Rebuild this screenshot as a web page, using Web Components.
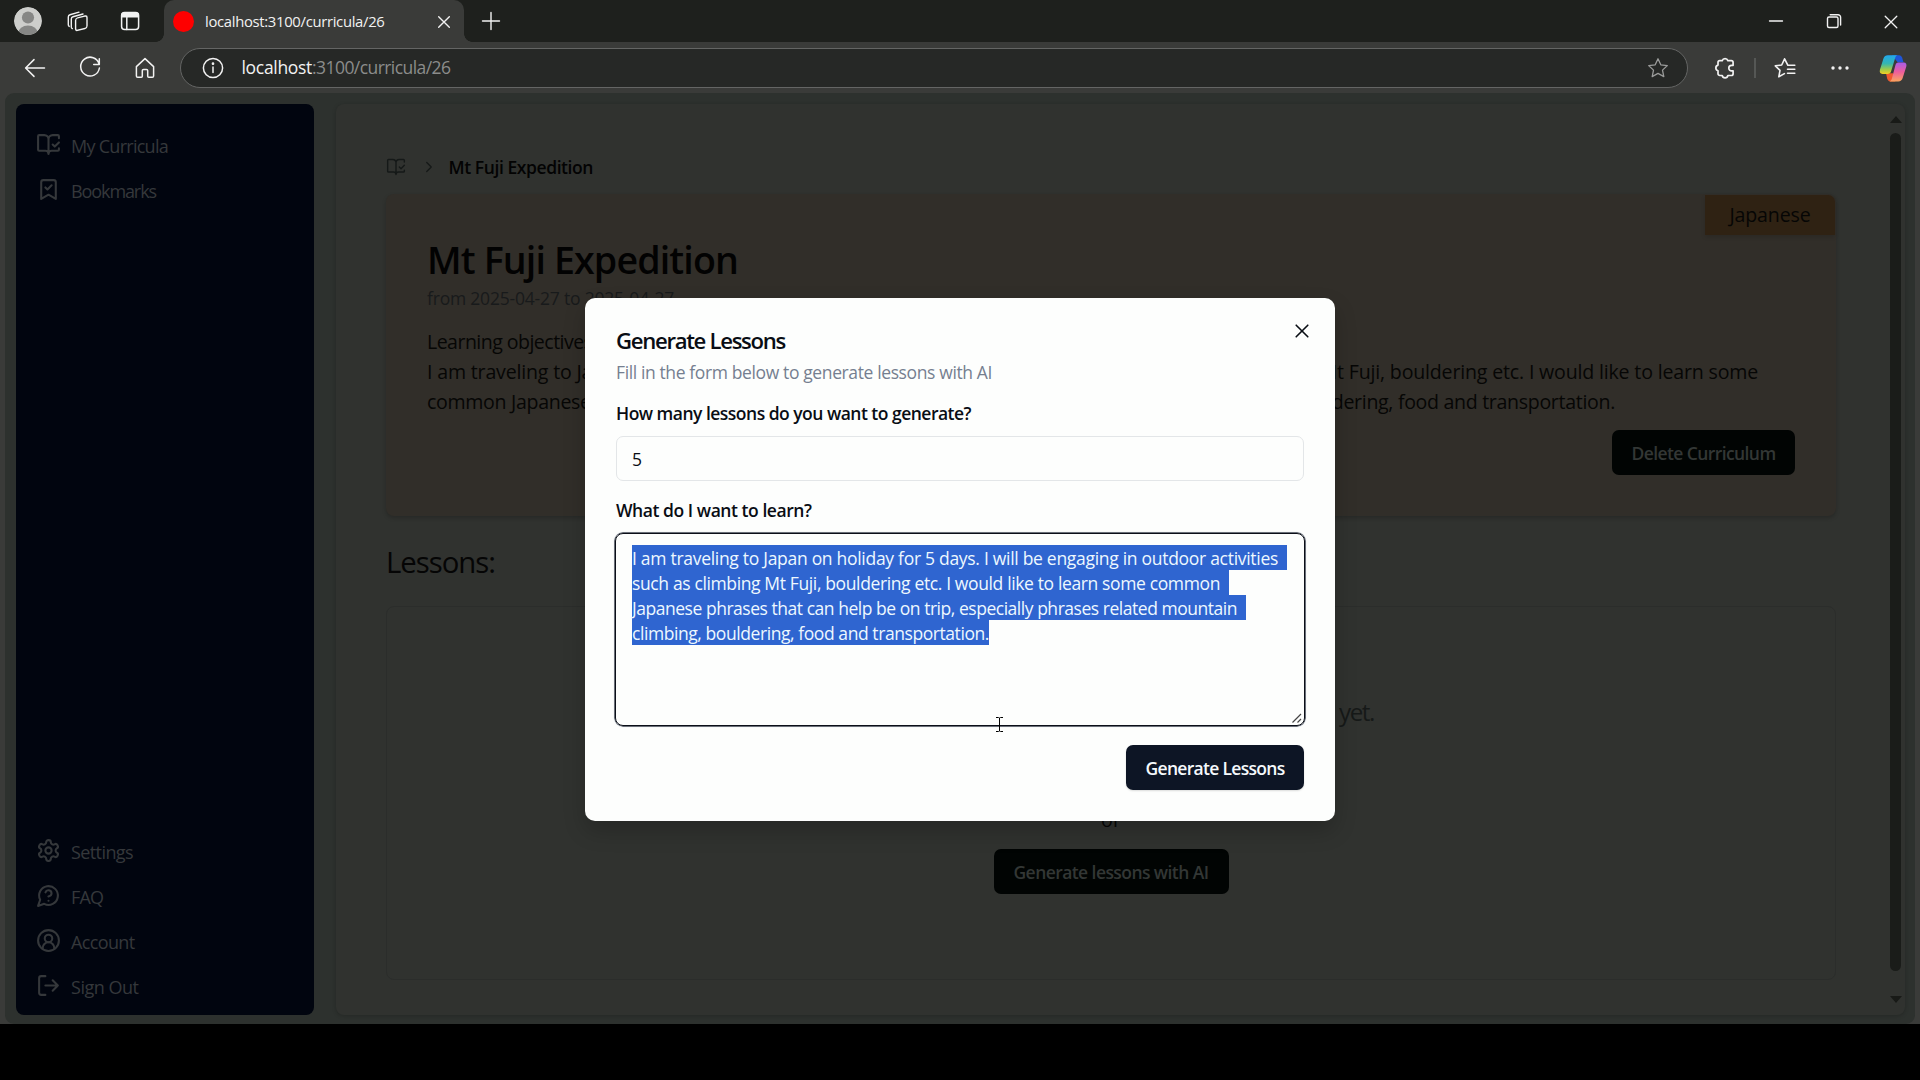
<!DOCTYPE html>
<html lang="en">
<head>
<meta charset="utf-8">
<title>localhost:3100/curricula/26</title>
<style>
html,body{margin:0;background:#000;height:100%;overflow:hidden}
body{font-family:"Open Sans","Noto Sans",sans-serif}
</style>
</head>
<body>
<browser-window></browser-window>
<script>
const ICONS={
 book:'<path d="M12 21V7M16 12l2 2 4-4M22 6V4a1 1 0 0 0-1-1h-5a4 4 0 0 0-4 4 4 4 0 0 0-4-4H3a1 1 0 0 0-1 1v13a1 1 0 0 0 1 1h6a3 3 0 0 1 3 3 3 3 0 0 1 3-3h6a1 1 0 0 0 1-1v-1.3"/>',
 bookmark:'<path d="m19 21-7-4-7 4V5a2 2 0 0 1 2-2h10a2 2 0 0 1 2 2ZM9 10l2 2 4-4"/>',
 gear:'<path d="M12.22 2h-.44a2 2 0 0 0-2 2v.18a2 2 0 0 1-1 1.73l-.43.25a2 2 0 0 1-2 0l-.15-.08a2 2 0 0 0-2.73.73l-.22.38a2 2 0 0 0 .73 2.73l.15.1a2 2 0 0 1 1 1.72v.51a2 2 0 0 1-1 1.74l-.15.09a2 2 0 0 0-.73 2.73l.22.38a2 2 0 0 0 2.73.73l.15-.08a2 2 0 0 1 2 0l.43.25a2 2 0 0 1 1 1.73V20a2 2 0 0 0 2 2h.44a2 2 0 0 0 2-2v-.18a2 2 0 0 1 1-1.73l.43-.25a2 2 0 0 1 2 0l.15.08a2 2 0 0 0 2.73-.73l.22-.39a2 2 0 0 0-.73-2.73l-.15-.08a2 2 0 0 1-1-1.74v-.5a2 2 0 0 1 1-1.74l.15-.09a2 2 0 0 0 .73-2.73l-.22-.38a2 2 0 0 0-2.73-.73l-.15.08a2 2 0 0 1-2 0l-.43-.25a2 2 0 0 1-1-1.73V4a2 2 0 0 0-2-2z"/><circle cx="12" cy="12" r="3"/>',
 faq:'<path d="M7.9 20A9 9 0 1 0 4 16.1L2 22ZM9.09 9a3 3 0 0 1 5.83 1c0 2-3 3-3 3M12 17h.01"/>',
 user:'<path d="M17.6 20.2v-.9a5.6 5.6 0 0 0-11.2 0v.9"/><circle cx="12" cy="10" r="3.6"/><circle cx="12" cy="12" r="10"/>',
 logout:'<path d="m16 17 5-5-5-5M21 12H9M9 21H5a2 2 0 0 1-2-2V5a2 2 0 0 1 2-2h4"/>',
 chevron:'<path d="m9 18 6-6-6-6"/>',
 close:'<path d="M6.2 6.2l11.6 11.6M17.8 6.2L6.2 17.8"/>',
 plus:'<path d="M12 3.5v17M3.5 12h17"/>',
 minimize:'<path d="M5.5 12h13"/>',
 restore:'<rect x="5.5" y="8" width="10.5" height="10.5" rx="1.5"/><path d="M8.2 5.7h7.8a2.6 2.6 0 0 1 2.6 2.6v7.7"/>',
 back:'<path d="M21.5 12H2.8M11 3.6L2.6 12l8.4 8.4"/>',
 reload:'<path d="M21.2 8.2A9.4 9.4 0 1 0 21.4 12M21.3 2.8v5.6h-5.6"/>',
 home:'<path d="M3.4 10.6 12 2.6l8.6 8v9.3a1.3 1.3 0 0 1-1.3 1.3h-3.6a1 1 0 0 1-1-1v-5.6a1.2 1.2 0 0 0-1.2-1.2h-3a1.2 1.2 0 0 0-1.2 1.2v5.6a1 1 0 0 1-1 1H4.7a1.3 1.3 0 0 1-1.3-1.3z"/>',
 info:'<circle cx="12" cy="12" r="9.6"/><path d="M12 11v5.6"/><circle cx="12" cy="7.7" r=".6" fill="currentColor"/>',
 star:'<path d="m12 2.8 2.8 6 6.5.8-4.8 4.5 1.3 6.5L12 17.4l-5.8 3.2 1.3-6.5-4.8-4.5 6.5-.8z"/>',
 puzzle:'<path d="M9.2 4.7a3 3 0 0 1 5.7 0h3.4a1.8 1.8 0 0 1 1.8 1.8v2.8h-1.5a2.8 2.8 0 0 0 0 5.6h1.5v2.8a1.8 1.8 0 0 1-1.8 1.8h-3.4a2.9 2.9 0 0 1-5.7 0H6.8A1.8 1.8 0 0 1 5 17.7v-3a2.9 2.9 0 0 1 0-5.6V6.5a1.8 1.8 0 0 1 1.8-1.8z"/>',
 favs:'<path d="M19 9.3h-4.1L11.6 2.8 8.7 9l-6.4.8 4.7 4.5-1.2 6.5 5.6-3.2M14.5 13.2h7.3M14.5 17.2h7.3M16.5 9.3h5.3"/>',
 dots:'<g fill="currentColor" stroke="none"><circle cx="5" cy="12" r="1.7"/><circle cx="12" cy="12" r="1.7"/><circle cx="19" cy="12" r="1.7"/></g>',
 stack:'<rect x="9.6" y="8.2" width="11.4" height="12.4" rx="2" transform="skewY(-14) translate(0 3.6)"/><path d="M6.3 19.6a2 2 0 0 1-1-1.7V10c0-1.2.6-2 1.7-2.3l10-2.7M3.2 17.4a2 2 0 0 1-.9-1.6V8c0-1.2.6-2 1.7-2.3l9-2.6"/>',
 panel:'<rect x="3.6" y="3.6" width="17" height="17" rx="3"/><path d="M8.8 8.6v12"/><path d="M3.2 8.6V6.2a3 3 0 0 1 3-3h11.8a3 3 0 0 1 3 3v2.4z" fill="currentColor" stroke="none"/>',
 avatar:'<clipPath id="c"><circle cx="12" cy="12" r="12"/></clipPath><g stroke="none" clip-path="url(#c)"><circle cx="12" cy="12" r="12" fill="#cdcecb"/><circle cx="12" cy="9" r="5.2" fill="#868785"/><ellipse cx="12" cy="22.4" rx="8.4" ry="6.6" fill="#868785"/></g>',
 copilot:'<defs><linearGradient id="a" x1="0" y1="0" x2="0" y2="1"><stop offset="0" stop-color="#21a7ee"/><stop offset=".45" stop-color="#35b6b0"/><stop offset=".75" stop-color="#9ccb4b"/><stop offset="1" stop-color="#f3cf23"/></linearGradient><linearGradient id="b" x1="0" y1="0" x2="0" y2="1"><stop offset="0" stop-color="#a65ce8"/><stop offset=".5" stop-color="#ee5d9c"/><stop offset="1" stop-color="#fba45f"/></linearGradient></defs><g stroke="none"><path d="M11 1h6.2c1.4 0 2.2.8 2.6 2l1.2 4h-5z" fill="#1f55d9"/><path d="M6 16.5h6l2 7H10c-1.6 0-2.5-1-3-2.6z" fill="#f0592f"/><path d="M7.6 1h8.6c-1.3 0-1.9.9-2.3 2.2l-3.5 11.6c-.5 1.5-1.4 2.3-3 2.3H3C1 17.1.3 15.5.8 13.5L3.9 3.7C4.5 1.9 5.7 1 7.6 1z" fill="url(#a)"/><path d="M16.5 7.2h4.7c2 0 2.7 1.5 2.2 3.5l-3.1 9.9c-.6 1.9-1.9 2.9-3.8 2.9H8.8c1.2-.2 1.8-1 2.2-2.2l3-11.5c.4-1.6 1.2-2.6 2.5-2.6z" fill="url(#b)"/></g>'
};
function define(name,html,setup){
  const t=document.createElement('template');t.innerHTML=html;
  customElements.define(name,class extends HTMLElement{
    constructor(){super();this.attachShadow({mode:'open'}).append(t.content.cloneNode(true))}
    connectedCallback(){if(setup)setup(this,this.shadowRoot)}
  });
}
define('ui-icon',`<style>:host{display:block;flex:none}svg{display:block;overflow:visible}</style>`,(el,root)=>{
  const s=el.getAttribute('size')||24,w=el.getAttribute('stroke')||2;
  root.innerHTML+=`<svg width="${s}" height="${s}" viewBox="0 0 24 24" fill="none" stroke="currentColor" stroke-width="${w}" stroke-linecap="round" stroke-linejoin="round">${ICONS[el.getAttribute('name')]}</svg>`;
});
/* A single line of text tracked to a given measure. */
define('ui-text',`<style>:host{display:block;white-space:nowrap;flex:none}span{display:inline-block}</style><span><slot></slot></span>`,(el,root)=>{
  const size=el.getAttribute('size'),wt=el.getAttribute('weight'),lh=el.getAttribute('line');
  if(size)el.style.fontSize=size*1.03+'px';
  if(wt)el.style.fontWeight=wt;
  if(lh)el.style.lineHeight=el.style.height=lh+'px';
  const w=+el.getAttribute('w');
  if(w){el.style.letterSpacing='0';
    const n=root.querySelector('span').getBoundingClientRect().width;
    el.style.letterSpacing=((w-n)/el.textContent.length)+'px';}
});
define('ui-button',`<style>:host{display:flex;align-items:center;justify-content:center;height:45px;box-sizing:border-box;border-radius:7px;background:#010403;color:#333735;flex:none;padding-top:1px}
:host([primary]){background:#0d1525;color:#f5f9fc;box-shadow:0 1px 2px #0002}</style><slot></slot>`);
define('tab-strip',`<style>
:host{display:flex;align-items:center;height:42px;background:#1e201d;color:#f2f2f2;padding-left:14px;box-sizing:border-box}
.tab{display:flex;align-items:center;width:300px;height:42px;margin-left:22px;background:#3a3b39;border-radius:10px 10px 0 0;box-sizing:border-box;padding-left:9px;position:relative}
.tab::before,.tab::after{content:"";position:absolute;bottom:0;width:8px;height:8px}
.tab::before{left:-8px;background:radial-gradient(circle at 0 0,transparent 7.5px,#3a3b39 8px)}
.tab::after{right:-8px;background:radial-gradient(circle at 100% 0,transparent 7.5px,#3a3b39 8px)}
.fav{width:21px;height:21px;border-radius:50%;background:#fe0000;margin-right:11px}
.sp{flex:1}
</style>
<ui-icon name="avatar" size="28"></ui-icon>
<ui-icon name="stack" style="margin-left:24px" stroke="1.4"></ui-icon>
<ui-icon name="panel" style="margin-left:28px" stroke="1.5"></ui-icon>
<div class="tab"><div class="fav"></div><ui-text size="14.4" line="40" w="179.5" style="margin-top:-1px">localhost:3100/curricula/26</ui-text><div class="sp"></div><ui-icon name="close" size="22" stroke="1.5" style="margin-right:9px;margin-top:1px"></ui-icon></div>
<ui-icon name="plus" stroke="1.4" style="margin-left:14.5px"></ui-icon>
<div class="sp"></div>
<ui-icon name="minimize" stroke="1.3"></ui-icon>
<ui-icon name="restore" stroke="1.4" style="margin-left:34px"></ui-icon>
<ui-icon name="close" stroke="1.3" style="margin:1px 17px 0 33.5px"></ui-icon>`);
define('address-bar',`<style>
:host{display:flex;align-items:center;height:51px;background:#3a3b39;color:#f2f2f2;padding-left:23px;box-sizing:border-box}
.pill{display:flex;align-items:center;width:1508px;height:40px;margin-left:23px;box-sizing:border-box;border:1px solid #646564;border-radius:20px;background:#262826;padding:0 17px 0 19.5px}
.rest{color:#8b8c8b}.sp{flex:1}.bar{width:2px;height:20px;background:#555755;margin-left:17.5px}
</style>
<ui-icon name="back" stroke="1.5"></ui-icon>
<ui-icon name="reload" stroke="1.5" style="margin-left:31px"></ui-icon>
<ui-icon name="home" stroke="1.5" style="margin-left:31px"></ui-icon>
<div class="pill"><ui-icon name="info" stroke="1.5"></ui-icon>
<ui-text size="17" line="37" w="70.5" style="margin-left:17px">localhost</ui-text><ui-text class="rest" size="17" line="37" w="138.5">:3100/curricula/26</ui-text>
<div class="sp"></div><ui-icon name="star" stroke="1.3" style="color:#9a9b9a"></ui-icon></div>
<ui-icon name="puzzle" stroke="1.7" style="margin-left:24.5px"></ui-icon>
<div class="bar"></div>
<ui-icon name="favs" stroke="1.6" style="margin-left:17px"></ui-icon>
<ui-icon name="dots" style="margin-left:31px"></ui-icon>
<ui-icon name="copilot" size="28" style="margin-left:26.5px"></ui-icon>`);
define('nav-item',`<style>:host{display:flex;align-items:center;height:45px;padding-left:19.5px;gap:10.5px;color:#35383b}</style>
<ui-icon size="25"></ui-icon><slot></slot>`,(el,root)=>{
  const old=root.querySelector('ui-icon'),i=document.createElement('ui-icon');
  i.setAttribute('name',el.getAttribute('icon'));i.setAttribute('size','25');old.replaceWith(i);
});
define('side-bar',`<style>:host{display:flex;flex-direction:column;width:298px;height:911px;box-sizing:border-box;padding:18px 0 7px;border-radius:8px;background:#01050f;flex:none}.sp{flex:1}ui-text{padding-top:2px}</style>
<nav-item icon="book"><ui-text size="17.5" line="24" w="97">My Curricula</ui-text></nav-item>
<nav-item icon="bookmark"><ui-text size="17.5" line="24" w="85">Bookmarks</ui-text></nav-item>
<div class="sp"></div>
<nav-item icon="gear"><ui-text size="17.5" line="24" w="62">Settings</ui-text></nav-item>
<nav-item icon="faq"><ui-text size="17.5" line="24" w="32">FAQ</ui-text></nav-item>
<nav-item icon="user"><ui-text size="17.5" line="24" w="63.5">Account</ui-text></nav-item>
<nav-item icon="logout"><ui-text size="17.5" line="24" w="67.5">Sign Out</ui-text></nav-item>`);
define('curriculum-card',`<style>
:host{display:flex;flex-direction:column;position:relative;height:322px;box-sizing:border-box;padding:41px 41px 0;background:#312e29;border-radius:8px;box-shadow:0 2px 4px #0003;color:#060605;flex:none}
.badge{position:absolute;right:1px;top:1px;width:130px;height:40px;display:flex;align-items:center;justify-content:center;background:#2f2213;border-radius:0 7px 0 0;box-shadow:0 2px 4px #0002}
ui-button{width:183px;align-self:flex-end;margin-top:13px}
</style>
<div class="badge"><ui-text size="19" line="40" w="81">Japanese</ui-text></div>
<ui-text size="36.5" weight="600" line="50" w="311" style="color:#020202">Mt Fuji Expedition</ui-text>
<ui-text size="17" line="25" w="247" style="margin-top:1px;color:#181a1b">from 2025-04-27 to 2025-04-27</ui-text>
<ui-text size="19" line="30" style="margin-top:16px" w="170">Learning objectives:</ui-text>
<ui-text size="19" line="30" w="1331">I am traveling to Japan on holiday for 5 days. I will be engaging in outdoor activities such as climbing Mt Fuji, bouldering etc. I would like to learn some</ui-text>
<ui-text size="19" line="30" w="1188">common Japanese phrases that can help be on trip, especially phrases related mountain climbing, bouldering, food and transportation.</ui-text>
<ui-button><ui-text size="17" weight="600" w="144">Delete Curriculum</ui-text></ui-button>`);
define('lesson-list',`<style>
:host{display:flex;flex-direction:column;height:374px;box-sizing:border-box;border:1px solid #2b2d2b;border-radius:8px;padding-top:87px;margin-top:24px;align-items:center;color:#060706}
ui-button{width:235px;margin-top:14px}
</style>
<ui-text size="23.5" line="36" w="35" style="align-self:flex-end;margin-right:461px;color:#161918">yet.</ui-text>
<ui-text size="19" line="30" style="margin-top:75px">or</ui-text>
<ui-button><ui-text size="17" weight="600" w="195">Generate lessons with AI</ui-text></ui-button>`);
define('main-panel',`<style>
:host{display:flex;width:1569px;height:911px;border-radius:8px;background:#30322f;box-shadow:0 1px 4px #0003;flex:none}
main{display:flex;flex-direction:column;width:1552px;box-sizing:border-box;padding:46px 52px 0 50px}
.crumb{display:flex;align-items:center;height:34px;margin-bottom:10px;flex:none}
.scroll{display:flex;flex-direction:column;align-items:center;width:15px;box-sizing:border-box;padding:12px 0}
.up,.down{width:0;height:0;border:6.5px solid transparent}
.up{border-top:0;border-bottom:7px solid #181a17}.down{border-bottom:0;border-top:7px solid #181a17}
.thumb{width:11px;height:838px;margin:10px 0 25px;border-radius:6px;background:#1a1c19}
</style>
<main>
<div class="crumb"><ui-icon name="book" size="20" stroke="1.7" style="color:#151918"></ui-icon><ui-icon name="chevron" size="18" stroke="1.7" style="margin-left:13.5px;color:#151918"></ui-icon><ui-text size="17" weight="600" line="36" w="144.5" style="margin-left:11px;color:#030303">Mt Fuji Expedition</ui-text></div>
<curriculum-card></curriculum-card>
<ui-text size="28.5" line="40" w="109" style="margin-top:26px;color:#050505">Lessons:</ui-text>
<lesson-list></lesson-list>
</main>
<div class="scroll"><div class="up"></div><div class="thumb"></div><div class="down"></div></div>`);
define('text-area',`<style>
:host{display:block;position:relative;height:193px;margin:11px -1px 0;box-sizing:border-box;border:1px solid #0b0f18;border-radius:8px;box-shadow:0 0 0 .5px #0b0f18,0 0 1px 1px #c5cbd5;padding:11px 16px}
.l{display:block;width:max-content;background:#2f65d0;color:#edf8ff;height:25px;padding-right:9px}
.l:nth-of-type(4){padding:0}ui-text{padding-top:1px}
svg{position:absolute}
</style>
<div class="l"><ui-text size="17" line="25" w="646">I am traveling to Japan on holiday for 5 days. I will be engaging in outdoor activities</ui-text></div>
<div class="l"><ui-text size="17" line="25" w="588">such as climbing Mt Fuji, bouldering etc. I would like to learn some common</ui-text></div>
<div class="l"><ui-text size="17" line="25" w="605">Japanese phrases that can help be on trip, especially phrases related mountain</ui-text></div>
<div class="l"><ui-text size="17" line="25" w="357">climbing, bouldering, food and transportation.</ui-text></div>
<svg style="right:2px;bottom:2px" width="10" height="10" viewBox="0 0 10 10" stroke="#444" stroke-width="1.2"><path d="M.5 9.5l8.5-8.5M5.5 9.5l3.5-3.5"/></svg>
<svg style="left:379px;top:182px" width="9" height="17" viewBox="0 0 9 17"><path d="M1 1.5h2.5l1 .5 1-.5H8M4.5 2v13M1 15.5h2.5l1-.5 1 .5H8" fill="none" stroke="#000"/></svg>`);
define('lesson-dialog',`<style>
:host{display:flex;flex-direction:column;position:absolute;left:585px;top:298px;width:750px;height:523px;box-sizing:border-box;padding:27px 31px 0;border-radius:10px;background:#fdfefd;box-shadow:0 10px 22px #0003;color:#090d14}
.x{position:absolute;right:21px;top:21px}
.input{display:flex;align-items:center;height:45px;box-sizing:border-box;border:1px solid #e3e6e8;border-radius:7px;margin-top:11px;padding-left:15px;flex:none}
ui-button{width:178px;align-self:flex-end;margin-top:19px}text-area{flex:none}
</style>
<ui-text size="21.5" weight="600" line="30" w="169">Generate Lessons</ui-text>
<ui-text size="17" line="24" w="376" style="margin-top:5px;color:#757f90">Fill in the form below to generate lessons with AI</ui-text>
<ui-text size="17" weight="600" line="24" w="355" style="margin-top:17px">How many lessons do you want to generate?</ui-text>
<div class="input"><ui-text size="17" line="43" style="padding-top:1px">5</ui-text></div>
<ui-text size="17" weight="600" line="24" w="195.5" style="margin-top:17px">What do I want to learn?</ui-text>
<text-area></text-area>
<ui-button primary><ui-text size="17" weight="600" w="139">Generate Lessons</ui-text></ui-button>
<ui-icon class="x" name="close" stroke="1.6"></ui-icon>`);
define('browser-window',`<style>
:host{display:flex;flex-direction:column;position:relative;width:1920px;height:1080px;background:#000;overflow:hidden}
.frame{background:#3a3b39;height:931px;padding:0 5px;box-sizing:border-box}
.page{display:flex;gap:22px;height:931px;background:#2d312e;border-radius:9px;padding:11px 0 0 11px;box-sizing:border-box}
</style>
<tab-strip></tab-strip><address-bar></address-bar>
<div class="frame"><div class="page"><side-bar></side-bar><main-panel></main-panel></div></div>
<lesson-dialog></lesson-dialog>`);
</script>
</body>
</html>
